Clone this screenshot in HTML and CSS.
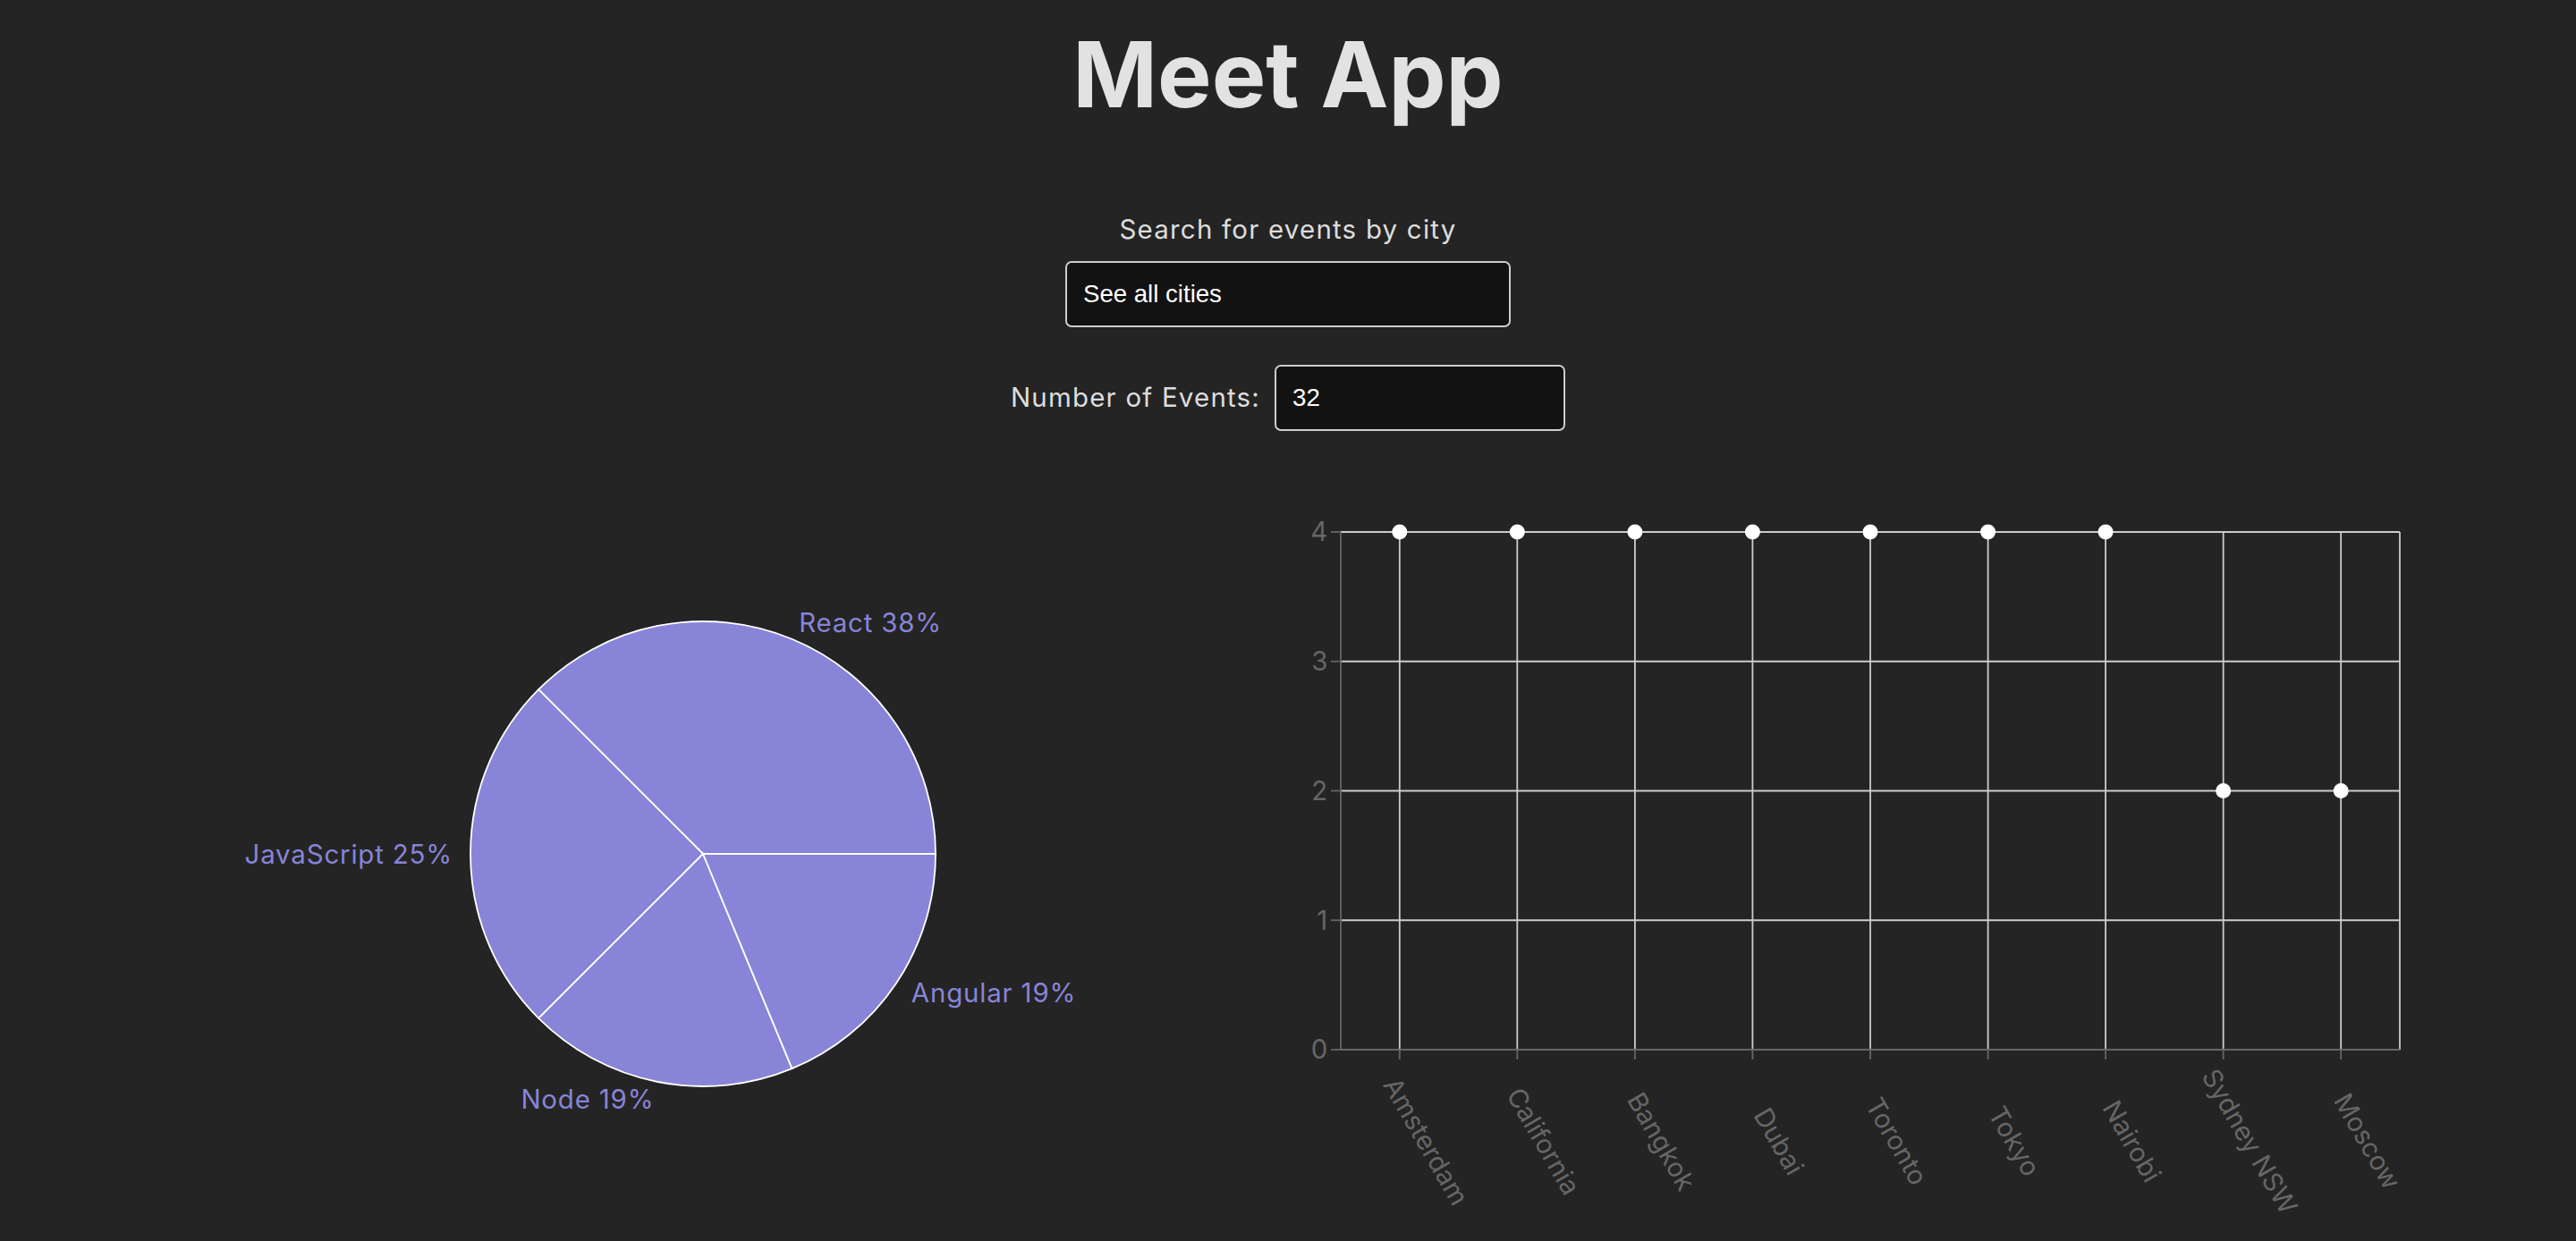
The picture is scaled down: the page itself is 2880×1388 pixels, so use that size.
FILE: index.html
```html
<!DOCTYPE html>
<html lang="en">
<head>
<meta charset="utf-8">
<title>Meet App</title>
<link rel="stylesheet" href="styles.css">
</head>
<body>
<div class="app">
  <h1 class="title">Meet App</h1>

  <div class="city-search">
    <label class="field-label" for="city">Search for events by city</label>
    <input id="city" class="text-input city-input" type="text" value="See all cities">
  </div>

  <div class="number-row">
    <label class="field-label inline" for="num">Number of Events:</label>
    <input id="num" class="text-input number-input" type="text" value="32">
  </div>

  <div class="charts">
    <svg class="chart pie-chart" width="1280" height="800" viewBox="0 0 1280 800">
      <g class="slices">
        <path class="slice" d="M626,395 L886,395 A260,260 0 0,0 442.15,211.15 Z"/>
        <path class="slice" d="M626,395 L442.15,211.15 A260,260 0 0,0 442.15,578.85 Z"/>
        <path class="slice" d="M626,395 L442.15,578.85 A260,260 0 0,0 725.5,635.2 Z"/>
        <path class="slice" d="M626,395 L725.5,635.2 A260,260 0 0,0 886,395 Z"/>
      </g>
      <g class="pie-labels">
        <text x="733.15" y="136.3" text-anchor="start">React 38%</text>
        <text x="346" y="395" text-anchor="end">JavaScript 25%</text>
        <text x="571.4" y="669.6" text-anchor="end">Node 19%</text>
        <text x="858.8" y="550.6" text-anchor="start">Angular 19%</text>
      </g>
    </svg>

    <svg class="chart scatter-chart" width="1280" height="800" viewBox="0 0 1280 800">
      <g class="grid">
        <line x1="59" y1="35" x2="1243" y2="35"/>
        <line x1="59" y1="179.75" x2="1243" y2="179.75"/>
        <line x1="59" y1="324.5" x2="1243" y2="324.5"/>
        <line x1="59" y1="469.25" x2="1243" y2="469.25"/>
        <line x1="124.8" y1="35" x2="124.8" y2="614"/>
        <line x1="256.3" y1="35" x2="256.3" y2="614"/>
        <line x1="387.9" y1="35" x2="387.9" y2="614"/>
        <line x1="519.4" y1="35" x2="519.4" y2="614"/>
        <line x1="651" y1="35" x2="651" y2="614"/>
        <line x1="782.6" y1="35" x2="782.6" y2="614"/>
        <line x1="914.1" y1="35" x2="914.1" y2="614"/>
        <line x1="1045.7" y1="35" x2="1045.7" y2="614"/>
        <line x1="1177.2" y1="35" x2="1177.2" y2="614"/>
        <line x1="1243" y1="35" x2="1243" y2="614"/>
      </g>
      <g class="axis">
        <line x1="59" y1="35" x2="59" y2="614"/>
        <line x1="59" y1="614" x2="1243" y2="614"/>
        <line x1="48" y1="35" x2="59" y2="35"/>
        <line x1="48" y1="179.75" x2="59" y2="179.75"/>
        <line x1="48" y1="324.5" x2="59" y2="324.5"/>
        <line x1="48" y1="469.25" x2="59" y2="469.25"/>
        <line x1="48" y1="614" x2="59" y2="614"/>
        <line x1="124.8" y1="614" x2="124.8" y2="625"/>
        <line x1="256.3" y1="614" x2="256.3" y2="625"/>
        <line x1="387.9" y1="614" x2="387.9" y2="625"/>
        <line x1="519.4" y1="614" x2="519.4" y2="625"/>
        <line x1="651" y1="614" x2="651" y2="625"/>
        <line x1="782.6" y1="614" x2="782.6" y2="625"/>
        <line x1="914.1" y1="614" x2="914.1" y2="625"/>
        <line x1="1045.7" y1="614" x2="1045.7" y2="625"/>
        <line x1="1177.2" y1="614" x2="1177.2" y2="625"/>
      </g>
      <g class="tick-labels y-ticks">
        <text x="44.3" y="35" dy="0.355em">4</text>
        <text x="44.3" y="179.75" dy="0.355em">3</text>
        <text x="44.3" y="324.5" dy="0.355em">2</text>
        <text x="44.3" y="469.25" dy="0.355em">1</text>
        <text x="44.3" y="614" dy="0.355em">0</text>
      </g>
      <g class="tick-labels x-ticks">
        <text x="154.3" y="716.5" transform="rotate(60 154.3 716.5)">Amsterdam</text>
        <text x="285.8" y="716.5" transform="rotate(60 285.8 716.5)">California</text>
        <text x="417.4" y="716.5" transform="rotate(60 417.4 716.5)">Bangkok</text>
        <text x="548.9" y="716.5" transform="rotate(60 548.9 716.5)">Dubai</text>
        <text x="680.5" y="716.5" transform="rotate(60 680.5 716.5)">Toronto</text>
        <text x="812.1" y="716.5" transform="rotate(60 812.1 716.5)">Tokyo</text>
        <text x="943.6" y="716.5" transform="rotate(60 943.6 716.5)">Nairobi</text>
        <text x="1075.2" y="716.5" transform="rotate(60 1075.2 716.5)">Sydney NSW</text>
        <text x="1206.7" y="716.5" transform="rotate(60 1206.7 716.5)">Moscow</text>
      </g>
      <g class="dots">
        <circle cx="124.8" cy="35" r="8.5"/>
        <circle cx="256.3" cy="35" r="8.5"/>
        <circle cx="387.9" cy="35" r="8.5"/>
        <circle cx="519.4" cy="35" r="8.5"/>
        <circle cx="651" cy="35" r="8.5"/>
        <circle cx="782.6" cy="35" r="8.5"/>
        <circle cx="914.1" cy="35" r="8.5"/>
        <circle cx="1045.7" cy="324.5" r="8.5"/>
        <circle cx="1177.2" cy="324.5" r="8.5"/>
      </g>
    </svg>
  </div>
</div>
</body>
</html>
```

FILE: styles.css
```css
html, body {
  margin: 0;
  padding: 0;
  background: #242424;
  overflow: hidden;
}

body {
  font-family: Inter, "Noto Sans", sans-serif;
  font-size: 29.4px;
  line-height: 1.5;
  color: rgba(255, 255, 255, 0.87);
}

.app {
  text-align: center;
}

.title {
  margin: 0;
  padding-top: 28px;
  font-family: Inter, "Liberation Sans", sans-serif;
  font-weight: 700;
  font-size: 101.7px;
  line-height: 1.1;
  color: rgba(255, 255, 255, 0.87);
}

.city-search {
  margin-top: 95.6px;
  display: flex;
  flex-direction: column;
  align-items: center;
}

.field-label {
  display: block;
  font-size: 29.4px;
  line-height: 44.1px;
  letter-spacing: 1.25px;
}

.field-label.inline {
  display: inline-block;
}

.text-input {
  box-sizing: border-box;
  height: 74px;
  margin: 0;
  padding: 0 18px;
  border: 2px solid #cdcdcd;
  border-radius: 7px;
  background: #121212;
  color: #ffffff;
  font-family: "Liberation Sans", Arial, sans-serif;
  font-size: 27.6px;
  outline: none;
}

.city-input {
  width: 498px;
  margin-top: 12.6px;
}

.number-row {
  margin-top: 42px;
  display: flex;
  justify-content: center;
  align-items: center;
  gap: 16px;
}

.number-input {
  width: 325px;
}

.charts {
  margin-top: 78px;
  display: flex;
  justify-content: center;
}

.chart {
  display: block;
  flex: none;
  overflow: visible;
}

.slice {
  fill: #8884d8;
  stroke: #ffffff;
  stroke-width: 1.8;
}

.pie-labels text {
  fill: #8884d8;
  font-family: Inter, "Noto Sans", sans-serif;
  font-size: 29.4px;
  letter-spacing: 0.85px;
  dominant-baseline: central;
}

.grid line {
  stroke: #cccccc;
  stroke-width: 1.8;
}

.axis line {
  stroke: #666666;
  stroke-width: 1.8;
}

.tick-labels text {
  fill: #666666;
  font-family: Inter, "Noto Sans", sans-serif;
  font-size: 29.4px;
}

.y-ticks text {
  text-anchor: end;
}

.x-ticks text {
  text-anchor: middle;
  dominant-baseline: central;
}

.dots circle {
  fill: #ffffff;
}
```
